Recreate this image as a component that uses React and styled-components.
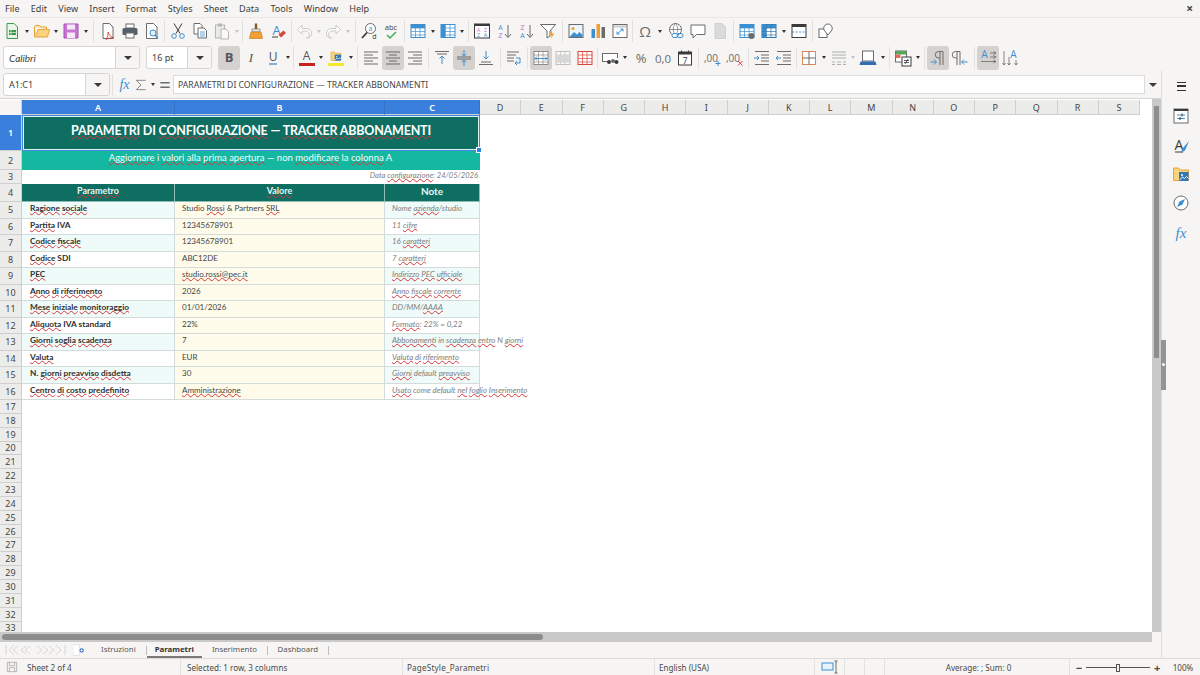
import React from "react";
import styled, { createGlobalStyle } from "styled-components";

const GlobalStyle = createGlobalStyle`
  html, body { margin: 0; padding: 0; background: #f6f5f4; overflow: hidden; }
  #root { width: 1200px; height: 675px; }
`;

const BLUE = "#3d8fd0";
const GREY = "#6b6b6b";
const DARK = "#3a3a3a";
const ORANGE = "#f0a030";
const RED = "#d9453a";

const Glyph = ({ x, y, size = 6, fill = BLUE, weight = 400, children, family = "Open Sans" }) => (
  <text x={x} y={y} fontSize={size} fill={fill} fontWeight={weight} fontFamily={family} textAnchor="middle">{children}</text>
);

const GridIcon = ({ head, side, stroke = BLUE }) => (
  <>
    <rect x="2" y="2.5" width="14" height="13" fill="#fff" stroke={stroke} />
    {head && <rect x="2" y="2.5" width="14" height="3.5" fill={head} />}
    {side && <rect x="2" y="2.5" width="4" height="13" fill={side} />}
    <path d="M2 6h14M2 9.5h14M2 13h14M6.5 2.5v13M11 2.5v13" stroke={stroke} strokeWidth=".7" fill="none" />
  </>
);

const Lines = ({ rows, stroke = GREY }) => (
  <path d={rows.map(([a, b, y]) => `M${a} ${y}H${b}`).join("")} stroke={stroke} strokeWidth="1" fill="none" />
);

const icons = {
  new: <><path d="M4 1.5h7l3.5 3.5v11.5H4z" fill="#eaf6ea" stroke="#3c9a4c" /><rect x="6" y="8" width="7" height="5" fill="#3c9a4c" /><path d="M8 8v5M6 10.5h7" stroke="#fff" strokeWidth=".6" /></>,
  open: <><path d="M1.5 5V15h13l2-7.5H5L3.5 13" fill="#fbd27e" stroke="#e8a33a" /><path d="M1.5 5l1-1.5h4L8 5h5.5v2.5" fill="#fde3ad" stroke="#e8a33a" /></>,
  save: <><path d="M2 2h14v14H2z" fill="#c678d0" stroke="#a84fb4" /><rect x="5" y="2.5" width="8" height="5" fill="#f6e8f8" /><rect x="5" y="10.5" width="8" height="5.5" fill="#f6e8f8" /></>,
  pdf: <><path d="M4 1.5h6.5L14 5v11.5H4z" fill="#fff" stroke={GREY} /><path d="M9 10c1 3 3 5 6 6-3-.5-6 0-8 1.5 1.5-2 2.5-5 2-7.5z" fill="none" stroke={RED} strokeWidth=".9" /></>,
  print: <><rect x="5" y="2" width="8" height="4" fill="#fff" stroke={GREY} /><rect x="1.5" y="6" width="15" height="7" rx="1.5" fill="#56606b" /><rect x="5" y="11" width="8" height="5" fill="#fff" stroke={GREY} /></>,
  preview: <><path d="M3.5 1.5h7L14 5v11.5H3.5z" fill="#fff" stroke={GREY} /><circle cx="10" cy="11" r="3" fill="#dff0fb" stroke={BLUE} /><path d="M12 13l3 3.5" stroke={BLUE} strokeWidth="1.4" /></>,
  cut: <><path d="M5 1.5l6 10M13 1.5l-6 10" stroke={DARK} fill="none" /><circle cx="5" cy="14" r="2.3" fill="none" stroke={BLUE} /><circle cx="13" cy="14" r="2.3" fill="none" stroke={BLUE} /></>,
  copy: <><path d="M3 1.5h6l2 2V12H3z" fill="#fff" stroke={GREY} /><path d="M7 6h6l2.5 2.5V16H7z" fill="#fff" stroke={GREY} /><path d="M9 10h5M9 12h5M9 14h5" stroke={BLUE} strokeWidth=".8" /></>,
  paste: <g opacity=".45"><rect x="2.5" y="3" width="9" height="13" fill="#ddd" stroke={GREY} /><rect x="5" y="1.5" width="4" height="3" fill={GREY} /><path d="M8 7h5l2.5 2.5V17H8z" fill="#fff" stroke={GREY} /></g>,
  clone: <><path d="M9 1.5v6" stroke="#8a5a2b" strokeWidth="2.4" /><rect x="5" y="7" width="8" height="3" fill="#e3e3e3" stroke={GREY} strokeWidth=".6" /><path d="M4 10h10l1.5 6.5h-13z" fill={ORANGE} stroke="#c77f1d" strokeWidth=".7" /></>,
  clear: <><Glyph x="7.5" y="12.5" size="13" fill={BLUE}>A</Glyph><path d="M3 15h6" stroke={DARK} /><path d="M9.5 13l5-4.5 2.5 2.5-5 4.5z" fill={RED} /></>,
  undo: <path d="M7 3L2.5 7.5 7 12V9h4c2.5 0 3.5 2 3.5 3.5s-1 3-3 3.5c3.5 0 5-2.5 5-4.5 0-3-2-5-5.5-5H7z" fill="#fff" stroke="#c9c9c9" />,
  redo: <path d="M11 3l4.5 4.5L11 12V9H7c-2.5 0-3.5 2-3.5 3.5s1 3 3 3.5C3 16 1.5 13.5 1.5 11.5c0-3 2-5 5.5-5h4z" fill="#fff" stroke="#c9c9c9" />,
  find: <><circle cx="10.5" cy="6.5" r="5" fill="#fff" stroke={GREY} /><path d="M7 10.5L2 16" stroke={DARK} strokeWidth="1.8" /><Glyph x="10.5" y="9" size="7" fill={BLUE}>a</Glyph><Glyph x="14.5" y="16.5" size="7" fill={DARK}>d</Glyph></>,
  spell: <><Glyph x="9" y="8" size="7.5" fill={DARK}>abc</Glyph><path d="M5 13l3 3 6-6" stroke="#3fae5a" strokeWidth="1.5" fill="none" /></>,
  rows: <GridIcon head="#3d8fd0" />,
  cols: <GridIcon side="#3d8fd0" />,
  sort: <><rect x="1.5" y="2" width="15" height="14" fill="#fff" stroke={DARK} /><rect x="1.5" y="2" width="15" height="2" fill={DARK} /><Glyph x="5.5" y="9.5" size="5.5" fill="#c06ad0">A</Glyph><Glyph x="12.5" y="9.5" size="5.5" fill="#c06ad0">Z</Glyph><Glyph x="5.5" y="15" size="5.5" fill={BLUE}>Z</Glyph><Glyph x="12.5" y="15" size="5.5" fill={BLUE}>A</Glyph></>,
  sortAz: <><Glyph x="5.5" y="8" size="7" fill={BLUE}>A</Glyph><Glyph x="5.5" y="16" size="7" fill="#c06ad0">Z</Glyph><path d="M13 3v12M10 12l3 3.5 3-3.5" stroke={GREY} fill="none" /></>,
  sortZa: <><Glyph x="5.5" y="8" size="7" fill="#c06ad0">Z</Glyph><Glyph x="5.5" y="16" size="7" fill={BLUE}>A</Glyph><path d="M13 3v12M10 12l3 3.5 3-3.5" stroke={GREY} fill="none" /></>,
  filter: <><path d="M1.5 2.5h15L11 9v5l-3 2V9z" fill="#fff" stroke={GREY} /><path d="M13 8l-3 5h2.5l-1 4 4-5.5h-2.5z" fill={ORANGE} /></>,
  image: <><rect x="2" y="2.5" width="14" height="13" fill="#eaf5fc" stroke={GREY} /><circle cx="6" cy="6.5" r="1.5" fill={ORANGE} /><path d="M2.5 15l4.5-5 3 2.5 2.5-2.5 3 3v2z" fill={BLUE} /></>,
  chart: <><rect x="2.5" y="7" width="3.5" height="9" fill={BLUE} /><rect x="7.5" y="2" width="3.5" height="14" fill={ORANGE} /><rect x="12.5" y="5" width="3.5" height="11" fill={GREY} /></>,
  pivot: <><rect x="2" y="2.5" width="14" height="13" fill="#fff" stroke={GREY} /><rect x="3" y="3.5" width="12" height="2" fill="#c9c9c9" /><path d="M6 12l6-5M12 7H9.5M12 7v2.5M6 12h2.5M6 12V9.5" stroke={BLUE} fill="none" /></>,
  omega: <Glyph x="9" y="14.5" size="15" fill={GREY}>Ω</Glyph>,
  link: <><circle cx="8.5" cy="7.5" r="6" fill="#fff" stroke={GREY} /><path d="M2.5 7.5h12M8.5 1.5c-3 3-3 9 0 12 3-3 3-9 0-12z" stroke={GREY} strokeWidth=".7" fill="none" /><rect x="5" y="11.5" width="6" height="4" rx="2" fill="#fff" stroke={BLUE} /><rect x="10" y="11.5" width="6" height="4" rx="2" fill="none" stroke={BLUE} /></>,
  comment: <path d="M2 3h14v9.5H7.5L4 16v-3.5H2z" fill="#fff" stroke={GREY} />,
  header: <path d="M4 1.5h7L14.5 5v11.5H4z" fill="#dadada" stroke="#cfcfcf" />,
  names: <><GridIcon head="#3d8fd0" /><circle cx="13.5" cy="14" r="3" fill={GREY} /></>,
  freeze: <GridIcon head="#3d8fd0" side="#3d8fd0" stroke="#2c74ad" />,
  split: <><rect x="2" y="2.5" width="14" height="13" fill="#fff" stroke={DARK} /><rect x="2" y="2.5" width="14" height="2.5" fill={DARK} /><path d="M2 10h14" stroke={BLUE} strokeDasharray="2 1.5" /></>,
  shapes: <><rect x="2" y="7" width="8" height="8.5" fill="#fff" stroke={GREY} /><path d="M10 2a4.5 4.5 0 0 1 5 6l-4 5-4-5a4.5 4.5 0 0 1 3-6z" fill="#fff" stroke={GREY} /></>,
  alignLeft: <Lines rows={[[2, 16, 3], [2, 11, 6], [2, 16, 9], [2, 11, 12], [2, 16, 15]]} />,
  alignCenter: <Lines rows={[[2, 16, 3], [5, 13, 6], [2, 16, 9], [5, 13, 12], [2, 16, 15]]} />,
  alignRight: <Lines rows={[[2, 16, 3], [7, 16, 6], [2, 16, 9], [7, 16, 12], [2, 16, 15]]} />,
  vTop: <><Lines rows={[[2, 16, 2.5], [4, 14, 5]]} /><path d="M9 15V7M6.5 9.5L9 7l2.5 2.5" stroke={BLUE} fill="none" /></>,
  vMid: <><Lines rows={[[2, 16, 8], [2, 16, 10]]} /><path d="M9 1v6M6.8 5L9 7l2.2-2M9 17v-6M6.8 13L9 11l2.2 2" stroke={BLUE} fill="none" /></>,
  vBot: <><Lines rows={[[4, 14, 13], [2, 16, 15.5]]} /><path d="M9 2v8M6.5 7.5L9 10l2.5-2.5" stroke={BLUE} fill="none" /></>,
  wrap: <><Lines rows={[[2, 14, 3], [2, 11, 6], [2, 9, 9], [2, 9, 12]]} /><path d="M11 9h4v5h-5M12 12l-2 2 2 2" stroke={BLUE} fill="none" /></>,
  merge: <><GridIcon stroke="#8c8c8c" /><path d="M3 9.5h12M5 7.5l-2 2 2 2M13 7.5l2 2-2 2" stroke={BLUE} fill="none" /></>,
  mergeOff: <g opacity=".5"><GridIcon stroke="#8c8c8c" /><rect x="2" y="6" width="14" height="7" fill="#bbb" /></g>,
  unmerge: <GridIcon stroke={RED} />,
  currency: <><rect x="1.5" y="4.5" width="15" height="8" fill="#fff" stroke={GREY} /><rect x="6" y="9" width="11" height="6.5" fill="#fff" /><circle cx="8" cy="13" r="2" fill={DARK} /><circle cx="12" cy="12" r="2" fill={GREY} /><circle cx="15.5" cy="13" r="2" fill={DARK} /></>,
  percent: <Glyph x="9" y="14" size="13" fill={GREY}>%</Glyph>,
  number: <Glyph x="9" y="14" size="11.5" fill={GREY}>0,0</Glyph>,
  date: <><rect x="2.5" y="3" width="13" height="13" fill="#fff" stroke={DARK} /><rect x="2.5" y="3" width="13" height="2.5" fill={DARK} /><path d="M5.5 1.5v3M12.5 1.5v3" stroke={DARK} /><Glyph x="9" y="14.5" size="9" fill={DARK}>7</Glyph></>,
  addDec: <><Glyph x="8" y="13" size="10" fill={GREY}>,00</Glyph><path d="M12.5 14.5h5M15 12v5" stroke={BLUE} /></>,
  delDec: <><Glyph x="8" y="13" size="10" fill={GREY}>,00</Glyph><path d="M13 12l4.5 4.5M17.5 12L13 16.5" stroke={RED} /></>,
  indent: <><Lines rows={[[2, 16, 2.5], [8, 16, 6], [8, 16, 9], [8, 16, 12], [2, 16, 15.5]]} /><path d="M1 9h5M4 7l2 2-2 2" stroke={BLUE} fill="none" /></>,
  outdent: <><Lines rows={[[2, 16, 2.5], [8, 16, 6], [8, 16, 9], [8, 16, 12], [2, 16, 15.5]]} /><path d="M6 9H1M3 7L1 9l2 2" stroke={BLUE} fill="none" /></>,
  borders: <><rect x="2.5" y="2.5" width="13" height="13" fill="#fff" stroke="#d98a5a" /><path d="M9 2.5v13M2.5 9h13" stroke={GREY} /></>,
  lineStyle: <g opacity=".5"><Lines rows={[[2, 16, 3], [2, 16, 6], [2, 16, 9]]} /><Lines rows={[[2, 5, 13], [7, 11, 13], [13, 16, 13], [2, 5, 15.5], [7, 11, 15.5], [13, 16, 15.5]]} /></g>,
  borderColor: <><rect x="3.5" y="2" width="11" height="10" fill="#fff" stroke={GREY} /><path d="M1.5 12.5h15L17.5 16H.5z" fill="#2f6fb0" /></>,
  cond: <><rect x="1.5" y="2" width="11" height="11" fill="#fff" stroke={GREY} /><rect x="1.5" y="2" width="11" height="3.5" fill="#58a65c" /><rect x="1.5" y="5.5" width="5" height="3.5" fill="#e26b60" /><rect x="8" y="8" width="9" height="9" fill="#fff" stroke={DARK} /><path d="M10 11.5h5M10 13.5h5M14 10l-3 5" stroke={DARK} strokeWidth=".8" /></>,
  ltr: <><path d="M11 16V2.5M14 16V2.5M14 2.5H9.5a3 3 0 0 0 0 6.5H11" stroke={GREY} fill="none" /><path d="M1.5 13H7M5 10.5L7.5 13 5 15.5" stroke={BLUE} fill="none" /></>,
  rtl: <><path d="M6 16V2.5M9 16V2.5M9 2.5H4.5a3 3 0 0 0 0 6.5H6" stroke={GREY} fill="none" /><path d="M16.5 13H11M13 10.5L10.5 13l2.5 2.5" stroke={BLUE} fill="none" /></>,
  horizontal: <><Glyph x="5.5" y="9" size="10" fill={BLUE}>A</Glyph><path d="M11 4h6M11 8h6M2 12.5h15M14.5 2.5L17 4l-2.5 1.5M14.5 6.5L17 8l-2.5 1.5M14.5 11L17 12.5 14.5 14" stroke={GREY} strokeWidth=".8" fill="none" /></>,
  vertical: <><Glyph x="12.5" y="9" size="10" fill={BLUE}>A</Glyph><path d="M3 2v14M8 8v8M15 11v5M1.5 14L3 16l1.5-2M6.5 14L8 16l1.5-2M13.5 14l1.5 2 1.5-2" stroke={GREY} strokeWidth=".8" fill="none" /></>,
  props: <><rect x="2" y="2" width="14" height="14" fill="#fff" stroke={GREY} /><rect x="2" y="2" width="14" height="2" fill={DARK} /><path d="M5 8h8M5 11.5h8" stroke={BLUE} /><path d="M10 6.5v3M8 10v3" stroke={DARK} /></>,
  stylesDeck: <><Glyph x="7" y="13" size="14" fill={DARK}>A</Glyph><path d="M3 15h8" stroke={DARK} /><path d="M17 4l-6 7-2.5 5 4.5-2.5z" fill={BLUE} /></>,
  gallery: <><path d="M1.5 15.5V3h5l1.5 2h8.5v10.5z" fill="#fbd27e" stroke="#e8a33a" /><rect x="7" y="7" width="9.5" height="9" fill="#2f78b5" /><circle cx="10" cy="10" r="1" fill="#fff" /><path d="M7.5 15l3-3 2 1.5 2-2 2 2" stroke="#fff" fill="none" /></>,
  navigator: <><circle cx="9" cy="9" r="7" fill="#fff" stroke={GREY} /><path d="M13 5L10.5 10.5 5 13l2.5-5.5z" fill="#3d8fd0" /></>,
  functions: <Glyph x="9" y="14" size="15" fill={BLUE} family="Liberation Serif"><tspan fontStyle="italic">fx</tspan></Glyph>,
  sum: <path d="M15 3H3l6 6-6 6h12" fill="none" stroke={GREY} />,
  equals: <path d="M3 6h12M3 12h12" stroke={GREY} strokeWidth="2" />,
  tabNew: <><rect x="0" y="1" width="9" height="15" fill="#fff" stroke="#ddd" /><circle cx="12" cy="9" r="3" fill="#3d6fc0" /><path d="M12 7v4M10 9h4" stroke="#fff" /></>,
  disk: <path d="M2 2h14v14H2zM5 2v5h8V2M5 16v-6h8v6" fill="none" stroke="#999" />,
  selectMode: <><rect x="1" y="5" width="11" height="7" fill="#e8f3fb" stroke={BLUE} /><path d="M15 3v12M13.5 3h3M13.5 15h3" stroke={GREY} /></>,
};

const Svg = styled.svg`
  width: ${(p) => p.$size || 18}px;
  height: ${(p) => p.$size || 18}px;
  display: block;
  flex: none;
`;

const Icon = ({ name, size }) => (
  <Svg $size={size} viewBox="0 0 18 18">{icons[name]}</Svg>
);

const NavSvg = styled.svg`
  width: 62px;
  height: 14px;
  display: block;
`;

const Page = styled.div`
  width: 1200px;
  height: 675px;
  display: flex;
  flex-direction: column;
  background: #f6f5f4;
  font-family: "Noto Sans", "Open Sans", sans-serif;
  color: #3d3d3d;
  overflow: hidden;
`;

const MenuBar = styled.div`
  height: 17px;
  flex: none;
  display: flex;
  align-items: center;
  justify-content: space-between;
  padding: 0 7px 0 5px;
  font-size: 9.1px;
  border-bottom: 1px solid #e8e7e5;
`;

const Menus = styled.div`
  display: flex;
  gap: 11.2px;
`;

const Close = styled.span`
  font-size: 12px;
  font-weight: 700;
  color: #444;
  line-height: 1;
`;

const ToolRow = styled.div`
  height: ${(p) => p.$h}px;
  flex: none;
  display: flex;
  align-items: center;
  padding-left: ${(p) => p.$pad || 1}px;
`;

const ToolBtn = styled.div`
  width: 22px;
  height: 24px;
  flex: none;
  display: flex;
  align-items: center;
  justify-content: center;
  border-radius: 3px;
  background: ${(p) => (p.$on ? "#d4d1ce" : "transparent")};
`;

const Arrow = styled.span`
  width: 7.5px;
  flex: none;
  display: flex;
  justify-content: center;
  &::after {
    content: "";
    border-left: 2.5px solid transparent;
    border-right: 2.5px solid transparent;
    border-top: 3px solid ${(p) => (p.$off ? "#c4c4c4" : "#333")};
  }
`;

const Sep = styled.span`
  width: ${(p) => p.$total}px;
  height: 22px;
  flex: none;
  display: flex;
  justify-content: center;
  &::after {
    content: "";
    width: 1px;
    background: ${(p) => (p.$blank ? "transparent" : "#e2e1df")};
  }
`;

const Combo = styled.div`
  width: ${(p) => p.$w}px;
  height: 23px;
  flex: none;
  box-sizing: border-box;
  margin-right: ${(p) => p.$mr || 0}px;
  display: flex;
  background: #fff;
  border: 1px solid #d6d5d3;
  border-radius: 3px;
  font-size: 9.5px;
`;

const ComboText = styled.span`
  flex: 1;
  display: flex;
  align-items: center;
  padding-left: 5px;
  font-style: ${(p) => (p.$italic ? "italic" : "normal")};
  font-family: ${(p) => (p.$italic ? '"Lato", sans-serif' : "inherit")};
  font-size: ${(p) => (p.$italic ? "10px" : "9px")};
`;

const ComboArrow = styled.span`
  width: 23px;
  flex: none;
  display: flex;
  align-items: center;
  justify-content: center;
  background: #f6f5f4;
  border-left: 1px solid #d6d5d3;
  border-radius: 0 3px 3px 0;
  &::after {
    content: "";
    border-left: 4px solid transparent;
    border-right: 4px solid transparent;
    border-top: 4px solid #3a3a3a;
  }
`;

const FormulaDrop = styled(ComboArrow)`
  width: 16px;
  background: transparent;
  border: 0;
`;

const TextTool = styled.span`
  font-family: ${(p) => (p.$italic ? '"Liberation Serif", serif' : '"Open Sans", sans-serif')};
  font-size: ${(p) => (p.$under ? 12 : 13)}px;
  line-height: 1;
  color: #555;
  font-weight: ${(p) => (p.$bold ? 700 : 400)};
  font-style: ${(p) => (p.$italic ? "italic" : "normal")};
  border-bottom: ${(p) => (p.$under ? "2px solid #7fb3dd" : "0")};
`;

const Swatch = styled.span`
  display: flex;
  flex-direction: column;
  align-items: center;
  font-family: "Open Sans", sans-serif;
  font-size: 12px;
  line-height: 12px;
  color: #555;
  &::after {
    content: "";
    width: 16px;
    height: 3px;
    margin-top: 1px;
    background: ${(p) => p.$color};
  }
`;

const Workspace = styled.div`
  flex: 1;
  min-height: 0;
  display: flex;
  position: relative;
`;

const Main = styled.div`
  width: 1162px;
  flex: none;
  display: flex;
  flex-direction: column;
  border-right: 1px solid #dddcda;
  box-sizing: border-box;
`;

const FormulaBar = styled.div`
  height: 28px;
  flex: none;
  display: flex;
  align-items: center;
  padding-left: 3px;
  border-bottom: 1px solid #d5d4d2;
  box-sizing: border-box;
`;

const FormulaIcons = styled.div`
  width: 58px;
  flex: none;
  display: flex;
  align-items: center;
  gap: 1px;
  padding-left: 1px;
  box-sizing: border-box;
`;

const FormulaInput = styled.div`
  flex: 1;
  height: 17px;
  display: flex;
  align-items: center;
  padding-left: 4px;
  background: #fff;
  border: 1px solid #dcdbd9;
  font-size: 8.65px;
  color: #444;
  white-space: nowrap;
`;

const SheetArea = styled.div`
  flex: 1;
  min-height: 0;
  display: flex;
`;

const SheetGrid = styled.div`
  flex: 1;
  min-width: 0;
  overflow: hidden;
  padding-top: 1px;
  background: #fff;
`;

const Row = styled.div`
  display: flex;
  height: ${(p) => p.$h}px;
`;

const Corner = styled.div`
  width: 22px;
  flex: none;
  background: #f6f5f4;
  box-sizing: border-box;
  border-right: 1px solid #cfcfcf;
`;

const ColHead = styled.div`
  width: ${(p) => p.$w}px;
  flex: none;
  box-sizing: border-box;
  display: flex;
  align-items: center;
  justify-content: center;
  font-size: 9px;
  color: ${(p) => (p.$on ? "#fff" : "#444")};
  font-weight: ${(p) => (p.$on ? 600 : 400)};
  background: ${(p) => (p.$on ? "#3b7fdc" : "#ececeb")};
  border-right: 1px solid ${(p) => (p.$on ? "#3571c4" : "#cfcfcf")};
  border-bottom: 1px solid #cfcfcf;
`;

const RowNum = styled.div`
  width: 22px;
  flex: none;
  box-sizing: border-box;
  display: flex;
  align-items: center;
  justify-content: center;
  font-size: 9px;
  color: ${(p) => (p.$on ? "#fff" : "#444")};
  font-weight: ${(p) => (p.$on ? 600 : 400)};
  background: ${(p) => (p.$on ? "#3b7fdc" : "#ececeb")};
  border-right: 1px solid #cfcfcf;
  border-bottom: 1px solid #cfcfcf;
`;

const Cell = styled.div`
  width: ${(p) => p.$w}px;
  flex: none;
  box-sizing: border-box;
  display: flex;
  align-items: center;
  justify-content: ${(p) => p.$justify || "flex-start"};
  padding: 0 ${(p) => p.$pad ?? 7}px ${(p) => p.$lift ?? 3}px;
  background: ${(p) => p.$bg || "#fff"};
  color: ${(p) => p.$color || "#444"};
  font-family: "Lato", sans-serif;
  font-size: ${(p) => p.$size || 8}px;
  font-weight: ${(p) => p.$weight || 400};
  font-style: ${(p) => (p.$italic ? "italic" : "normal")};
  white-space: nowrap;
  border-right: 1px solid ${(p) => p.$line || "#d4dbdb"};
  border-bottom: 1px solid ${(p) => p.$line || "#d4dbdb"};
`;

const TitleCell = styled(Cell)`
  position: relative;
  border: 0;
  letter-spacing: -0.2px;
  box-shadow: inset 0 0 0 1px #3d86e0, inset 0 0 0 2px #dff4f2;
`;

const Handle = styled.span`
  position: absolute;
  right: -2px;
  bottom: -2px;
  width: 4px;
  height: 4px;
  background: #2f7fe0;
  border: 1px solid #fff;
`;

const Typo = styled.span`
  text-decoration: underline wavy #d8343a 1px;
  text-underline-offset: 0;
  text-decoration-skip-ink: none;
`;

const VScroll = styled.div`
  width: 9px;
  flex: none;
  box-sizing: border-box;
  padding: 7px 2px 0;
  background: #c9c9c9;
  &::before {
    content: "";
    display: block;
    height: 252px;
    background: #8e8e8e;
  }
`;

const SideHandle = styled.div`
  position: absolute;
  left: 1161px;
  top: 269px;
  width: 5px;
  height: 50px;
  background: #949494;
  &::after {
    content: "";
    position: absolute;
    left: 1px;
    top: 23px;
    width: 3px;
    height: 3px;
    border-radius: 50%;
    background: #fff;
  }
`;

const HScroll = styled.div`
  height: 10px;
  flex: none;
  margin-right: 9px;
  padding: 2px 0;
  box-sizing: border-box;
  background: #c9c9c9;
  &::before {
    content: "";
    display: block;
    height: 100%;
    width: 541px;
    margin-left: 2px;
    border-radius: 3px;
    background: #8c8c8c;
  }
`;

const TabBar = styled.div`
  height: 16px;
  flex: none;
  display: flex;
  align-items: center;
  font-size: 7.85px;
`;

const TabNav = styled.div`
  width: 73px;
  flex: none;
  padding-left: 5px;
  box-sizing: border-box;
`;

const AddTab = styled.div`
  width: 18px;
  height: 15px;
  flex: none;
  display: flex;
  align-items: center;
`;

const Tab = styled.div`
  height: 16px;
  padding: 0 ${(p) => p.$pad}px;
  box-sizing: border-box;
  display: flex;
  align-items: center;
  font-weight: ${(p) => (p.$on ? 700 : 400)};
  color: ${(p) => (p.$on ? "#333" : "#555")};
  border-bottom: 2px solid ${(p) => (p.$on ? "#7a7a7a" : "transparent")};
`;

const TabSep = styled.span`
  width: 1px;
  height: 9px;
  flex: none;
  background: #bdbdbd;
`;

const Sidebar = styled.div`
  flex: 1;
  display: flex;
  flex-direction: column;
  align-items: center;
  padding-top: 6px;
`;

const DeckBtn = styled.div`
  height: ${(p) => p.$h || 29}px;
  display: flex;
  align-items: center;
  justify-content: center;
`;

const Hamburger = styled.span`
  width: 9px;
  height: 7px;
  border-top: 1.5px solid #333;
  border-bottom: 1.5px solid #333;
  position: relative;
  &::after {
    content: "";
    position: absolute;
    left: 0;
    right: 0;
    top: 2.75px;
    height: 1.5px;
    background: #333;
  }
`;

const StatusBar = styled.div`
  height: 17px;
  flex: none;
  display: flex;
  align-items: center;
  border-top: 1px solid #dcdbd9;
  box-sizing: border-box;
  font-size: 8.1px;
  color: #4a4a4a;
`;

const StatusCell = styled.div`
  width: ${(p) => p.$w}px;
  flex: none;
  height: 100%;
  box-sizing: border-box;
  display: flex;
  align-items: center;
  justify-content: ${(p) => (p.$center ? "center" : "flex-start")};
  padding-left: ${(p) => p.$pad || 0}px;
  letter-spacing: ${(p) => p.$track || 0}px;
  border-right: 1px solid ${(p) => (p.$plain ? "transparent" : "#e2e1df")};
  white-space: nowrap;
`;

const SlideTrack = styled.span`
  width: 64px;
  height: 1px;
  margin: 0 4px;
  background: #555;
  position: relative;
  &::after {
    content: "";
    position: absolute;
    left: 30px;
    top: -3px;
    width: 2px;
    height: 6px;
    background: #f6f5f4;
    border: 1px solid #555;
  }
`;

const ZoomSign = styled.span`
  font-size: 11px;
  font-weight: 700;
  line-height: 1;
`;

const mark = (text) =>
  text.split(/(~[^~]+~)/).filter(Boolean).map((part, i) =>
    part[0] === "~" ? <Typo key={i}>{part.slice(1, -1)}</Typo> : <span key={i}>{part}</span>
  );

const menus = ["File", "Edit", "View", "Insert", "Format", "Styles", "Sheet", "Data", "Tools", "Window", "Help"];

// numbers are separator slots in px, "_" prefixed ones have no line
const standard = ["new", ">", "open", ">", "save", ">", 7, "pdf", "print", "preview", 4.5, "cut", "copy", "paste", ">off", 4.5, "clone", "clear", 4, "undo", ">off", "redo", ">off", 6, "find", "spell", 5, "rows", ">", "cols", ">", 5, "sort", "sortAz", "sortZa", "filter", 6, "image", "chart", "pivot", 3, "omega", ">", "_1.5", "link", "comment", "header", 5, "names", "freeze", ">", "split", 5.5, "shapes"];

const aligns = [5.5, "alignLeft", "*alignCenter", "alignRight", 5, "vTop", "*vMid", "vBot", 6, "wrap", 5, "*merge", "mergeOff", "unmerge", 3, "currency", ">", "_1.5", "percent", "number", "date", 5, "addDec", "delDec", 6, "indent", "outdent", 3, "borders", ">", "lineStyle", ">off", "borderColor", ">", 5.5, "cond", ">", 5.5, "*ltr", "rtl", 6, "*horizontal", "vertical"];

const renderTools = (list) =>
  list.map((item, i) => {
    if (typeof item === "number") return <Sep key={i} $total={item} />;
    if (item[0] === "_") return <Sep key={i} $total={Number(item.slice(1))} $blank />;
    if (item[0] === ">") return <Arrow key={i} $off={item === ">off"} />;
    const on = item[0] === "*";
    return <ToolBtn key={i} $on={on}><Icon name={on ? item.slice(1) : item} /></ToolBtn>;
  });

const columns = [["A", 153, true], ["B", 210, true], ["C", 95, true]].concat(
  "DEFGHIJKLMNOPQRS".split("").map((c) => [c, 41.25, false])
);

const TEAL = "#0f6e62";
const params = [
  ["~Ragione~ ~sociale~", "Studio ~Rossi~ & Partners ~SRL~", "Nome ~azienda~/studio"],
  ["~Partita~ IVA", "12345678901", "11 ~cifre~"],
  ["~Codice~ ~fiscale~", "12345678901", "16 ~caratteri~"],
  ["~Codice~ SDI", "ABC12DE", "7 ~caratteri~"],
  ["~PEC~", "~studio.rossi@pec.it~", "~Indirizzo~ ~PEC~ ~ufficiale~"],
  ["~Anno~ ~di~ ~riferimento~", "2026", "~Anno~ ~fiscale~ ~corrente~"],
  ["~Mese~ ~iniziale~ ~monitoraggio~", "01/01/2026", "DD/MM/~AAAA~"],
  ["~Aliquota~ IVA standard", "22%", "~Formato~: 22% = 0,22"],
  ["~Giorni~ ~soglia~ ~scadenza~", "7", "~Abbonamenti~ in ~scadenza~ ~entro~ N ~giorni~"],
  ["~Valuta~", "EUR", "~Valuta~ ~di~ ~riferimento~"],
  ["N. ~giorni~ ~preavviso~ ~disdetta~", "30", "~Giorni~ default ~preavviso~"],
  ["~Centro~ ~di~ ~costo~ ~predefinito~", "~Amministrazione~", "~Usato~ come default ~nel~ ~foglio~ ~Inserimento~"],
];

const blankRows = Array.from({ length: 17 }, (_, i) => i + 17);

export default function App() {
  return (
    <Page>
      <GlobalStyle />
      <MenuBar>
        <Menus>{menus.map((m) => <span key={m}>{m}</span>)}</Menus>
        <Close>×</Close>
      </MenuBar>
      <ToolRow $h={26}>{renderTools(standard)}</ToolRow>
      <ToolRow $h={27} $pad={3}>
        <Combo $w={137} $mr={6}><ComboText $italic>Calibri</ComboText><ComboArrow /></Combo>
        <Combo $w={66} $mr={6}><ComboText>16 pt</ComboText><ComboArrow /></Combo>
        <ToolBtn $on><TextTool $bold>B</TextTool></ToolBtn>
        <ToolBtn><TextTool $italic>I</TextTool></ToolBtn>
        <ToolBtn><TextTool $under>U</TextTool></ToolBtn>
        <Arrow />
        <Sep $total={4} />
        <ToolBtn><Swatch $color="#c9211e">A</Swatch></ToolBtn>
        <Arrow />
        <ToolBtn><Swatch $color="#f5e92e"><Icon name="gallery" size={12} /></Swatch></ToolBtn>
        <Arrow />
        {renderTools(aligns)}
      </ToolRow>
      <Workspace>
        <Main>
          <FormulaBar>
            <Combo $w={107}><ComboText>A1:C1</ComboText><ComboArrow /></Combo>
            <Sep $total={5} />
            <FormulaIcons>
              <Icon name="functions" size={17} />
              <Icon name="sum" size={14} />
              <Arrow />
              <Icon name="equals" size={14} />
            </FormulaIcons>
            <FormulaInput>PARAMETRI DI CONFIGURAZIONE — TRACKER ABBONAMENTI</FormulaInput>
            <FormulaDrop />
          </FormulaBar>
          <SheetArea>
            <SheetGrid>
              <Row $h={15}>
                <Corner />
                {columns.map(([name, w, on]) => <ColHead key={name} $w={w} $on={on}>{name}</ColHead>)}
              </Row>
              <Row $h={36}>
                <RowNum $on>1</RowNum>
                <TitleCell $w={458} $bg={TEAL} $color="#fff" $size={12.5} $weight={700} $justify="center" $lift={5}>
                  <span>{mark("~PARAMETRI~ DI ~CONFIGURAZIONE~ — ~TRACKER~ ~ABBONAMENTI~")}</span>
                  <Handle />
                </TitleCell>
              </Row>
              <Row $h={19}>
                <RowNum>2</RowNum>
                <Cell $w={458} $bg="#14b8a0" $color="#f2fdfb" $size={9.5} $justify="center" $line="#14b8a0" $lift={5}>
                  <span>{mark("~Aggiornare~ i ~valori~ ~alla~ ~prima~ ~apertura~ — non ~modificare~ la ~colonna~ A")}</span>
                </Cell>
              </Row>
              <Row $h={14}>
                <RowNum>3</RowNum>
                <Cell $w={458} $justify="flex-end" $pad={1} $italic $size={7.6} $color="#808080" $line="#fff">
                  <span>{mark("Data ~configurazione~: 24/05/2026")}</span>
                </Cell>
              </Row>
              <Row $h={18}>
                <RowNum>4</RowNum>
                {[["~Parametro~", 153, 9], ["~Valore~", 210, 9], ["Note", 95, 10]].map(([t, w, s], i) => (
                  <Cell key={i} $w={w} $bg={TEAL} $color="#e9f6f3" $weight={700} $size={s} $justify="center" $line="#8fbdb6" $lift={4}>
                    <span>{mark(t)}</span>
                  </Cell>
                ))}
              </Row>
              {params.map(([a, b, c], i) => {
                const tint = i % 2 === 0 ? "#effbf9" : "#fff";
                return (
                  <Row key={i} $h={16.5}>
                    <RowNum>{i + 5}</RowNum>
                    <Cell $w={153} $pad={8} $bg={tint} $weight={700} $size={8.3} $color="#2f2f2f"><span>{mark(a)}</span></Cell>
                    <Cell $w={210} $bg="#fffbeb"><span>{mark(b)}</span></Cell>
                    <Cell $w={95} $bg={tint} $italic $size={7.9} $color="#7d7d7d"><span>{mark(c)}</span></Cell>
                  </Row>
                );
              })}
              {blankRows.map((n) => (
                <Row key={n} $h={13.85}><RowNum>{n}</RowNum></Row>
              ))}
            </SheetGrid>
            <VScroll />
          </SheetArea>
          <HScroll />
          <TabBar>
            <TabNav>
              <NavSvg viewBox="0 0 62 14">
                <path d="M1 2v10M9 2L4 7l5 5M13 3L8 7l5 4M21 3l-5 4 5 4M25 3l-5 4 5 4M32 3l5 4-5 4M38 3l5 4-5 4M44 3l5 4-5 4M51 2l5 5-5 5M60 2v10" stroke="#d6d6d6" fill="none" />
              </NavSvg>
            </TabNav>
            <AddTab><Icon name="tabNew" size={13} /></AddTab>
            <Tab $pad={10}>Istruzioni</Tab>
            <TabSep />
            <Tab $on $pad={8}>Parametri</Tab>
            <Tab $pad={10}>Inserimento</Tab>
            <TabSep />
            <Tab $pad={9.5}>Dashboard</Tab>
            <TabSep />
          </TabBar>
        </Main>
        <Sidebar>
          <DeckBtn $h={18}><Hamburger /></DeckBtn>
          <DeckBtn $h={42}><Icon name="props" /></DeckBtn>
          <DeckBtn $h={18}><Icon name="stylesDeck" /></DeckBtn>
          <DeckBtn $h={38}><Icon name="gallery" /></DeckBtn>
          <DeckBtn $h={20}><Icon name="navigator" /></DeckBtn>
          <DeckBtn $h={40}><Icon name="functions" /></DeckBtn>
        </Sidebar>
        <SideHandle />
      </Workspace>
      <StatusBar>
        <StatusCell $w={23} $pad={6} $plain><Icon name="disk" size={12} /></StatusCell>
        <StatusCell $w={158} $pad={4}>Sheet 2 of 4</StatusCell>
        <StatusCell $w={222} $pad={6}>Selected: 1 row, 3 columns</StatusCell>
        <StatusCell $w={252} $pad={4} $track={0.2}>PageStyle_Parametri</StatusCell>
        <StatusCell $w={160} $pad={4}>English (USA)</StatusCell>
        <StatusCell $w={30} $center><Icon name="selectMode" /></StatusCell>
        <StatusCell $w={20} />
        <StatusCell $w={20} />
        <StatusCell $w={185} $pad={3} $center>Average: ; Sum: 0</StatusCell>
        <StatusCell $w={97} $center $plain>
          <ZoomSign>−</ZoomSign><SlideTrack /><ZoomSign>+</ZoomSign>
        </StatusCell>
        <StatusCell $w={33} $center $plain>100%</StatusCell>
      </StatusBar>
    </Page>
  );
}
